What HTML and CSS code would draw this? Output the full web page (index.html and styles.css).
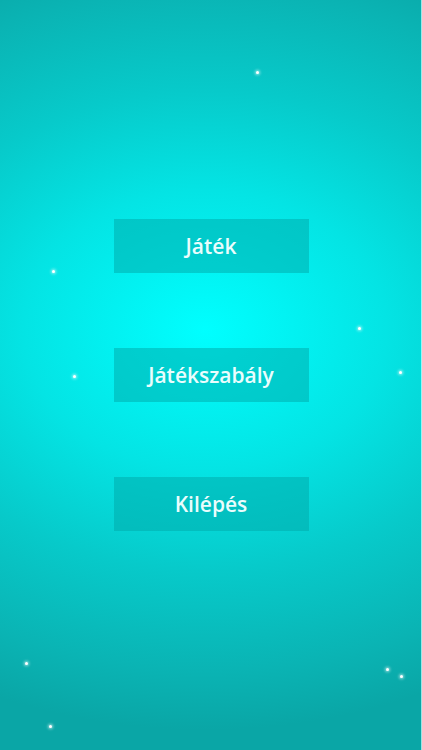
FILE: index.html
```html
<!DOCTYPE html>
<html lang="hu">
<head>
<meta charset="utf-8">
<title>Menü</title>
<link rel="stylesheet" href="styles.css">
</head>
<body>
<main class="screen">
  <span class="star" style="left:256px;top:71px"></span>
  <span class="star" style="left:52px;top:270px"></span>
  <span class="star" style="left:358px;top:327px"></span>
  <span class="star" style="left:73px;top:375px"></span>
  <span class="star" style="left:399px;top:371px"></span>
  <span class="star" style="left:25px;top:662px"></span>
  <span class="star" style="left:386px;top:668px"></span>
  <span class="star" style="left:400px;top:675px"></span>
  <span class="star" style="left:49px;top:725px"></span>
  <nav class="menu">
    <button class="menu-btn">Játék</button>
    <button class="menu-btn">Játékszabály</button>
    <button class="menu-btn">Kilépés</button>
  </nav>
</main>
</body>
</html>
```
FILE: styles.css
```css
html, body {
  margin: 0;
  padding: 0;
}
body {
  width: 422px;
  height: 750px;
  overflow: hidden;
}
.screen {
  position: relative;
  width: 422px;
  height: 750px;
  background: radial-gradient(ellipse 520px 400px at 205px 330px,
    #00ffff 0%, #04e4e4 35%, #07caca 60%, #0ab4b4 85%, #0aa6a6 100%);
  box-shadow: inset -1px 0 0 rgba(220, 255, 255, 0.7);
  display: flex;
  flex-direction: column;
  align-items: center;
  padding-top: 219px;
  box-sizing: border-box;
}
.menu {
  display: flex;
  flex-direction: column;
  gap: 75px;
}
.menu-btn {
  width: 195px;
  height: 54px;
  border: none;
  margin: 0;
  padding: 0 0 1px;
  background: rgba(0, 168, 168, 0.5);
  color: #eafdfd;
  font-family: "Open Sans", "DejaVu Sans", sans-serif;
  font-weight: 600;
  font-size: 21px;
  letter-spacing: 0;
  cursor: pointer;
}
.star {
  position: absolute;
  width: 3px;
  height: 3px;
  border-radius: 50%;
  background: #ffffff;
  box-shadow: 0 0 3px 1px rgba(255, 255, 255, 0.6);
}
```
